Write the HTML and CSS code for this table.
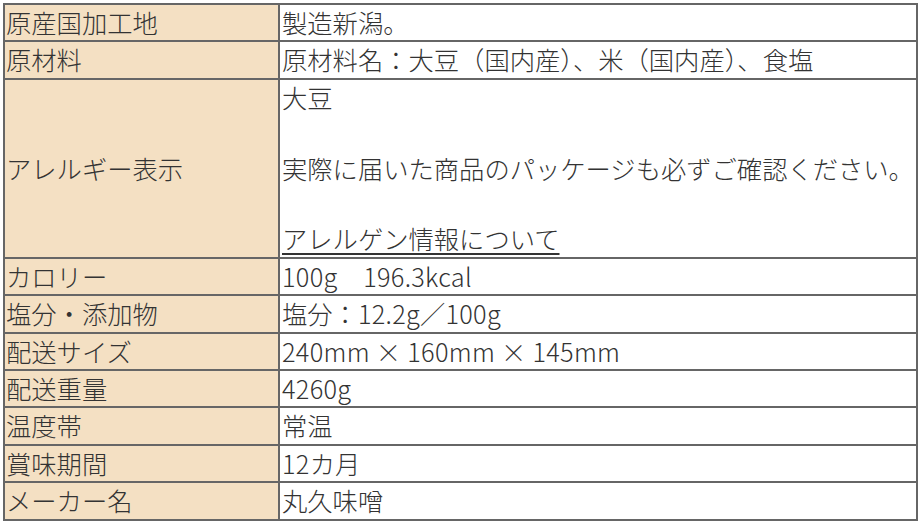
FILE: index.html
```html
<!DOCTYPE html>
<html lang="ja">
<head>
<meta charset="utf-8">
<link rel="stylesheet" href="styles.css">
</head>
<body>
<div class="wrap">
<table class="spec">
  <colgroup><col class="c-label"><col class="c-value"></colgroup>
  <tr><th>原産国加工地</th><td>製造新潟。</td></tr>
  <tr><th>原材料</th><td>原材料名：大豆（国内産）、米（国内産）、食塩</td></tr>
  <tr><th>アレルギー表示</th><td>大豆<br><br>実際に届いた商品のパッケージも必ずご確認ください。<br><br><a class="link" href="#">アレルゲン情報について</a></td></tr>
  <tr><th>カロリー</th><td><span class="num">100g　196.3kcal</span></td></tr>
  <tr><th>塩分・添加物</th><td>塩分：<span class="num">12.2g</span>／<span class="num">100g</span></td></tr>
  <tr><th>配送サイズ</th><td><span class="num">240mm × 160mm × 145mm</span></td></tr>
  <tr><th>配送重量</th><td><span class="num">4260g</span></td></tr>
  <tr><th>温度帯</th><td>常温</td></tr>
  <tr><th>賞味期間</th><td><span class="num">12</span>カ月</td></tr>
  <tr><th>メーカー名</th><td>丸久味噌</td></tr>
</table>
</div>
</body>
</html>
```
FILE: styles.css
```css
html, body {
  margin: 0;
  padding: 0;
  background: #ffffff;
}
.wrap {
  padding: 3px 3px 0 3px;
}
.spec {
  border-collapse: collapse;
  width: 915px;
  table-layout: fixed;
  font-family: "Noto Sans CJK JP", "Noto Sans", sans-serif;
  font-size: 25.3px;
  line-height: 35.4px;
  color: #333333;
}
.c-label { width: 275px; }
.spec th, .spec td {
  border: 2px solid #666666;
  text-align: left;
  font-weight: 300;
  white-space: nowrap;
}
.spec th {
  background: #f4e0c3;
  padding: 0 2px 0 1px;
  vertical-align: middle;
}
.spec td {
  background: #ffffff;
  padding: 0 2px 0 2px;
  vertical-align: top;
}
.num {
  letter-spacing: 0.3px;
}
.link {
  color: #333333;
  text-decoration: underline;
  text-decoration-thickness: 2px;
  text-underline-offset: 4px;
}
```
